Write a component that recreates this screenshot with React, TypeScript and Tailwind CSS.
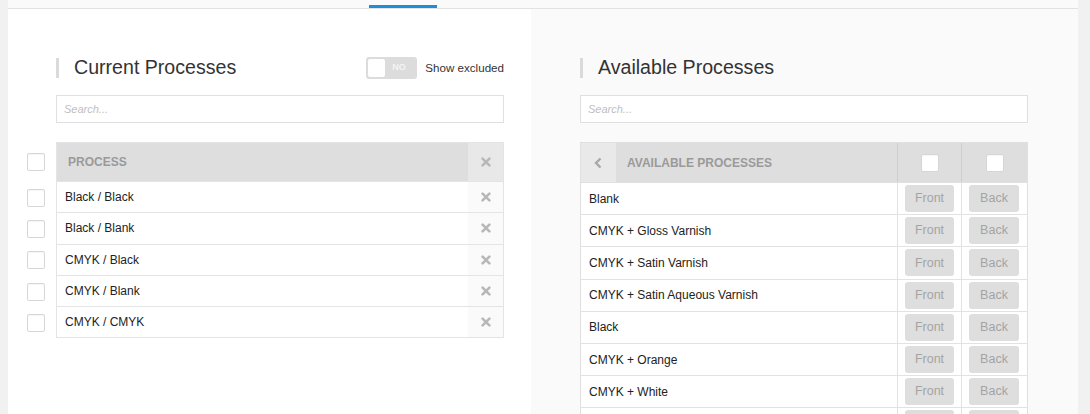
import React from 'react';

const current = ['Black / Black', 'Black / Blank', 'CMYK / Black', 'CMYK / Blank', 'CMYK / CMYK'];
const available = [
  'Blank',
  'CMYK + Gloss Varnish',
  'CMYK + Satin Varnish',
  'CMYK + Satin Aqueous Varnish',
  'Black',
  'CMYK + Orange',
  'CMYK + White',
  'CMYK + Silver',
];

function XIcon() {
  return (
    <svg width="10" height="10" viewBox="0 0 10 10">
      <path d="M1.6 1.6 L8.4 8.4 M8.4 1.6 L1.6 8.4" stroke="#b8b8b8" strokeWidth="2.6" strokeLinecap="round" />
    </svg>
  );
}

function Chevron() {
  return (
    <svg width="9" height="12" viewBox="0 0 9 12">
      <path d="M6.5 1.5 L2 6 L6.5 10.5" stroke="#a8a8a8" strokeWidth="2.4" fill="none" />
    </svg>
  );
}

function Checkbox() {
  return <div className="w-[18px] h-[18px] bg-white border border-[#d6d6d6] rounded-[2px] shadow-[inset_0_1px_1px_rgba(0,0,0,0.04)]" />;
}

function Heading({ title }: { title: string }) {
  return (
    <div className="flex items-center">
      <div className="w-[3px] h-[20px] bg-[#dadada]" />
      <h2 className="ml-[15px] text-[19.6px] leading-none text-[#333]">{title}</h2>
    </div>
  );
}

function Search() {
  return (
    <div className="mt-[16px] w-[448px] h-[28px] bg-white border border-[#e0e0e0] flex items-center pl-[7px]">
      <span className="text-[11px] italic text-[#c0c0c0]">Search...</span>
    </div>
  );
}

export default function App() {
  return (
    <div
      className="w-[1090px] h-[414px] flex bg-[#f1f1f1] overflow-hidden"
      style={{ fontFamily: '"Liberation Sans", Arial, sans-serif' }}
    >
      <div className="w-[8px] shrink-0" />
      <div className="w-[1070px] flex flex-col">
        {/* Tabs strip */}
        <div className="h-[9px] shrink-0 bg-[#fafafa] border-b border-[#e2e2e2] flex items-end">
          <div className="ml-[361px] w-[68px] h-[3px] bg-[#1b8ed6]" />
        </div>

        <div className="flex flex-1 min-h-0">
          {/* Current processes */}
          <div className="w-[523px] bg-white pt-[48px]">
            <div className="ml-[48px] w-[448px] flex items-center justify-between h-[22px]">
              <Heading title="Current Processes" />
              <div className="flex items-center">
                <div className="w-[51px] h-[22px] bg-[#dcdcdc] rounded-[3px] flex items-center pl-[2px]">
                  <div className="w-[17px] h-[18px] bg-white rounded-[2px]" />
                  <span className="ml-[7px] text-[9px] font-bold text-[#f4f4f4]">NO</span>
                </div>
                <span className="ml-[8px] text-[11.6px] text-[#333]">Show excluded</span>
              </div>
            </div>
            <div className="ml-[48px]">
              <Search />
            </div>

            <div className="mt-[19px] flex flex-col">
              <div className="flex items-center">
                <div className="w-[48px] pl-[19px]">
                  <Checkbox />
                </div>
                <div className="w-[448px] h-[40px] flex border border-[#e4e4e4]">
                  <div className="flex-1 bg-[#dedede] flex items-center pl-[11px] text-[12px] font-bold text-[#9a9a9a]">
                    PROCESS
                  </div>
                  <div className="w-[35px] bg-[#e8e8e8] flex items-center justify-center">
                    <XIcon />
                  </div>
                </div>
              </div>
              {current.map((name) => (
                <div key={name} className="flex items-center">
                  <div className="w-[48px] pl-[19px]">
                    <Checkbox />
                  </div>
                  <div className="w-[448px] h-[31.3px] flex border-x border-b border-[#e4e4e4]">
                    <div className="flex-1 flex items-center pl-[8px] text-[12px] text-[#222]">{name}</div>
                    <div className="w-[35px] bg-[#fafafa] flex items-center justify-center">
                      <XIcon />
                    </div>
                  </div>
                </div>
              ))}
            </div>
          </div>

          {/* Available processes */}
          <div className="w-[547px] bg-[#fafafa] pt-[48px] pl-[49px]">
            <div className="h-[22px] flex items-center">
              <Heading title="Available Processes" />
            </div>
            <Search />

            <div className="mt-[19px] w-[448px] flex flex-col border-x border-t border-[#e0e0e0]">
              <div className="h-[40px] flex border-b border-[#e0e0e0]">
                <div className="w-[35px] bg-[#e9e9e9] flex items-center justify-center">
                  <Chevron />
                </div>
                <div className="flex-1 bg-[#dedede] flex items-center pl-[11px] text-[12px] font-bold text-[#9a9a9a]">
                  AVAILABLE PROCESSES
                </div>
                <div className="w-[64px] bg-[#dedede] border-l border-[#cfcfcf] flex items-center justify-center">
                  <Checkbox />
                </div>
                <div className="w-[66px] bg-[#dedede] border-l border-[#cfcfcf] flex items-center justify-center">
                  <Checkbox />
                </div>
              </div>
              {available.map((name) => (
                <div key={name} className="h-[32.2px] shrink-0 flex bg-white border-b border-[#e2e2e2]">
                  <div className="flex-1 flex items-center pl-[8px] text-[12px] text-[#222]">{name}</div>
                  <div className="w-[64px] border-l border-[#e2e2e2] flex items-center pl-[7px]">
                    <button className="w-[49px] h-[27px] rounded-[3px] bg-[#dedede] text-[12.5px] text-[#a4a4a4]">Front</button>
                  </div>
                  <div className="w-[66px] border-l border-[#e2e2e2] flex items-center pl-[7px]">
                    <button className="w-[50px] h-[27px] rounded-[3px] bg-[#dedede] text-[12.5px] text-[#a4a4a4]">Back</button>
                  </div>
                </div>
              ))}
            </div>
          </div>
        </div>
      </div>
      <div className="w-[12px] shrink-0" />
    </div>
  );
}
